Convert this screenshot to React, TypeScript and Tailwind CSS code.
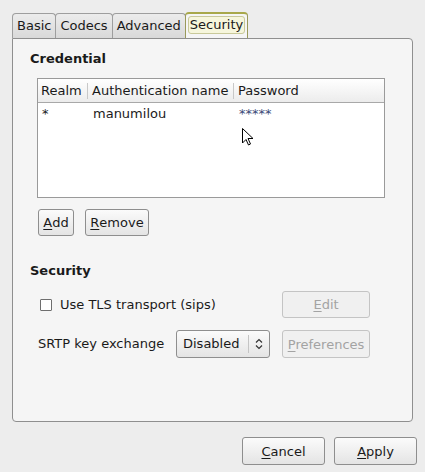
import React from 'react';

const font = { fontFamily: '"DejaVu Sans", "Liberation Sans", sans-serif' };

const Mn: React.FC<{ text: string; at?: number }> = ({ text, at = 0 }) => (
    <>
        {text.slice(0, at)}
        <span className="underline underline-offset-2">{text[at]}</span>
        {text.slice(at + 1)}
    </>
);

const Btn: React.FC<{ className?: string; disabled?: boolean; children: React.ReactNode }> = ({
    className = '',
    disabled,
    children,
}) => (
    <button
        className={`flex items-center justify-center rounded-[3px] border text-[13px] leading-none ${
            disabled
                ? 'border-[#c4c4c4] bg-[#f0f0f0] text-[#a3a3a3]'
                : 'border-[#8e8e8e] bg-gradient-to-b from-[#fbfbfb] to-[#e4e4e4] text-[#1a1a1a]'
        } ${className}`}
    >
        {children}
    </button>
);

const Tab: React.FC<{ label: string; active?: boolean }> = ({ label, active }) =>
    active ? (
        <div className="flex h-[26px] items-start rounded-t-[4px] border border-b-0 border-[#9a9a5a] border-t-[#a8a84a] border-t-2 bg-[#f5f5f5] px-[2px] pt-[2px]">
            <div className="flex h-[18px] items-center rounded-[3px] border border-[#c9c99a] bg-[#f6f6dc] px-[1px] text-[13px] text-[#1a1a1a]">
                {label}
            </div>
        </div>
    ) : (
        <div className="-mr-px flex h-[25px] items-center rounded-t-[4px] border border-b-0 border-[#9e9e9e] bg-gradient-to-b from-[#ececec] to-[#d9d9d9] px-[4px] text-[13px] text-[#1a1a1a]">
            {label}
        </div>
    );

export default function App() {
    return (
        <div className="relative h-[472px] w-[425px] bg-[#ededed] pl-[12px] pt-[12px] text-[#1a1a1a]" style={font}>
            <div className="flex items-end">
                <Tab label="Basic" />
                <Tab label="Codecs" />
                <Tab label="Advanced" />
                <Tab label="Security" active />
            </div>

            <div className="h-[384px] w-[401px] rounded-b-[4px] rounded-tr-[4px] border border-[#8f8f8f] bg-[#f5f5f5] pl-[17px]">
                <div className="mt-[12px] h-[16px] text-[13px] font-bold leading-[16px]">Credential</div>

                <div className="ml-[7px] mt-[11px] h-[120px] w-[348px] border border-[#9a9a9a] bg-white">
                    <div className="flex h-[24px] items-center border-b border-[#a8a8a8] bg-gradient-to-b from-[#ffffff] to-[#ececec] text-[13px]">
                        <div className="w-[50px] border-r border-[#c8c8c8] pl-[3px] leading-[16px]">Realm</div>
                        <div className="w-[146px] border-r border-[#c8c8c8] pl-[4px] leading-[16px]">Authentication name</div>
                        <div className="pl-[4px] leading-[16px]">Password</div>
                    </div>
                    <div className="flex h-[22px] items-center text-[13px]">
                        <div className="w-[50px] pl-[4px]">*</div>
                        <div className="w-[146px] pl-[5px]">manumilou</div>
                        <div className="pl-[5px] text-[#3a4a78]">*****</div>
                    </div>
                </div>

                <div className="ml-[8px] mt-[11px] flex gap-[11px]">
                    <Btn className="h-[27px] w-[36px]">
                        <Mn text="Add" />
                    </Btn>
                    <Btn className="h-[27px] w-[64px]">
                        <Mn text="Remove" />
                    </Btn>
                </div>

                <div className="mt-[27px] h-[16px] text-[13px] font-bold leading-[16px]">Security</div>

                <div className="mt-[12px] flex h-[27px] items-center">
                    <div className="ml-[10px] h-[12px] w-[12px] rounded-[1px] border border-[#6e6e6e] bg-white" />
                    <div className="ml-[8px] w-[222px] text-[13px]">Use TLS transport (sips)</div>
                    <Btn disabled className="h-[27px] w-[88px]">
                        <Mn text="Edit" />
                    </Btn>
                </div>

                <div className="mt-[12px] flex h-[28px] items-center">
                    <div className="ml-[8px] w-[138px] text-[13px]">SRTP key exchange</div>
                    <div className="flex h-[28px] w-[94px] items-center rounded-[3px] border border-[#8e8e8e] bg-gradient-to-b from-[#fbfbfb] to-[#e4e4e4]">
                        <div className="w-[71px] pl-[6px] text-[13px]">Disabled</div>
                        <div className="h-[18px] border-l border-[#c4c4c4]" />
                        <svg width="20" height="20" viewBox="0 0 20 20" className="text-[#333]">
                            <path d="M7 8.5 L10 5.5 L13 8.5 M7 11.5 L10 14.5 L13 11.5" fill="none" stroke="currentColor" strokeWidth="1.2" />
                        </svg>
                    </div>
                    <Btn disabled className="ml-[12px] h-[28px] w-[88px]">
                        <Mn text="Preferences" />
                    </Btn>
                </div>
            </div>

            <div className="mr-[8px] mt-[15px] flex justify-end gap-[9px]">
                <Btn className="h-[28px] w-[83px]">
                    <Mn text="Cancel" />
                </Btn>
                <Btn className="h-[28px] w-[83px]">
                    <Mn text="Apply" />
                </Btn>
            </div>

            <svg className="absolute left-[241px] top-[127px]" width="14" height="20" viewBox="0 0 14 20">
                <path d="M1.5 1.5 L1.5 16 L5 12.5 L7.5 18 L9.5 17 L7 11.5 L12 11.5 Z" fill="white" stroke="black" strokeWidth="1" strokeLinejoin="miter" />
            </svg>
        </div>
    );
}
